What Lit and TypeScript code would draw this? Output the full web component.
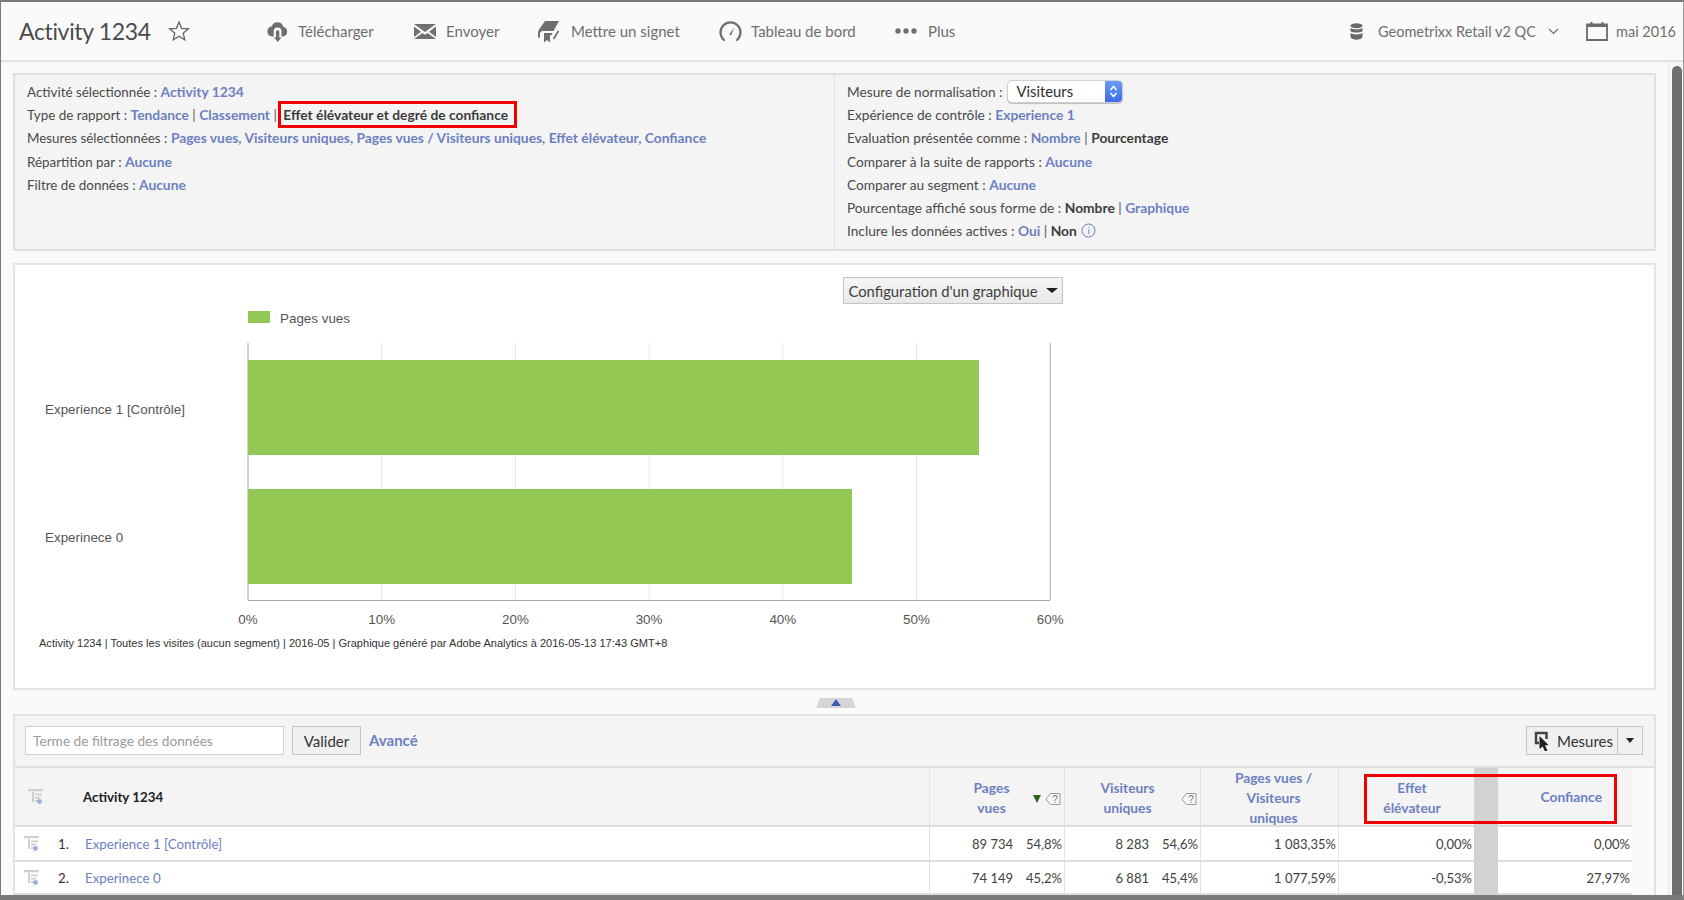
import { LitElement, html, css, svg } from "lit";
import { customElement } from "lit/decorators.js";

const treeIcon = html`<svg class="tree" width="16" height="15" viewBox="0 0 16 15"><path d="M0 0h15v2.200H0zM4 3h2v10H4zM7 4.500h7v1.800H7zM7 7.700h5.500v1.800H7zM7 10.900h3v1.800H7z" fill="#cfcfcf"/><circle cx="11.500" cy="12.500" r="2.400" fill="#9dadde"/></svg>`;
const tagIcon = html`<svg class="tagicon" width="16" height="14" viewBox="0 0 16 14"><path d="M1 7l4.500-5.500H15v11H5.500z" fill="#f6f6f6" stroke="#9a9a9a"/><text class="tagq" x="10" y="10.800" text-anchor="middle">?</text></svg>`;

const ticks = [0, 10, 20, 30, 40, 50, 60];
const tickX = (i: number) => 248 + i * 133.7;

@customElement("app-root")
export class AppRoot extends LitElement {
  static styles = css`
    :host { display: block; height: 900px; overflow: hidden; background: #fafafa; color: #4a4a4a;
      font-family: "Lato", "Open Sans", sans-serif; font-size: 13.300px; }
    * { box-sizing: border-box; }
    a { color: #6c80c2; text-decoration: none; font-weight: 700; }
    b { color: #3c3c3c; font-weight: 700; }
    .frame { height: 900px; display: flex; flex-direction: column; border-top: 2px solid #7a7a7a; border-left: 1px solid #7a7a7a; border-right: 1px solid #9a9a9a; border-bottom: 5px solid #7a7a7a; overflow: hidden; }

    .top { height: 60px; flex: none; display: flex; align-items: center; border-bottom: 2px solid #e2e2e2; color: #6e6e6e; font-size: 15px; }
    .title { font-size: 23px; letter-spacing: -0.350px; color: #4c4c4c; margin-left: 18px; width: 131px; white-space: nowrap; }
    .star { margin-left: 18px; margin-right: 76px; display: block; }
    .act { display: flex; align-items: center; white-space: nowrap; }
    .act svg { display: block; flex: none; }
    .a-dl { width: 100px; gap: 9px; }
    .a-send { width: 92px; gap: 9px; margin-left: 47px; }
    .a-mark { width: 140px; gap: 11px; margin-left: 32px; }
    .a-dash { width: 136px; gap: 9px; margin-left: 42px; }
    .a-more { width: 60px; gap: 11px; margin-left: 40px; }
    .a-suite { width: 186px; gap: 15px; font-size: 14.500px; }
    .a-date { width: 87px; gap: 8px; margin-left: 27px; font-size: 14.500px; }
    .chev { margin-left: 12px; display: flex; }
    .endpad { width: 10px; }
    .spacer { flex: 1; }

    .body { flex: 1; min-height: 0; display: flex; }
    .main { flex: 1; min-width: 0; padding: 11px 12px 0 12px; display: flex; flex-direction: column; }
    .scroll { width: 15px; flex: none; background: #f6f6f6; border-left: 1px solid #e6e6e6; padding: 4px 1px 0 3px; }
    .thumb { height: 100%; background: #6f6f6f; border-radius: 5px 5px 0 0; }

    .info { height: 178px; flex: none; display: flex; background: #f4f4f4; border: 2px solid #e0e0e0; }
    .col { padding: 5px 0 0 12px; line-height: 23.200px; white-space: nowrap; }
    .col > div { height: 23.200px; }
    .col a, .col b { font-size: 13.800px; }
    .col.l { width: 820px; border-right: 1px solid #e2e2e2; font-size: 13.400px; }
    .col.r { flex: 1; padding-left: 12px; font-size: 13.700px; }
    .sep { font-style: normal; margin: 0 3.500px; color: #555; }
    .row { display: flex; align-items: center; gap: 4px; }
    .boxed { position: relative; margin-left: 3px; }
    .boxed::after { content: ""; position: absolute; left: -5px; right: -9px; top: -5px; bottom: -5px; border: 3px solid #f00000; pointer-events: none; }
    .select { display: inline-flex; width: 116px; height: 23px; border: 1px solid #cfcfcf; border-radius: 5px; background: #fff; color: #2e2e2e; overflow: hidden; margin-left: 1px; padding-left: 8px; align-items: center; justify-content: space-between; font-size: 14.800px; box-shadow: 0 1px 1px #bbb; }
    .select i { width: 17px; height: 23px; background: linear-gradient(#6d9cf6, #3a6ce8); display: flex; align-items: center; justify-content: center; }
    .info-i { margin-left: 0; }

    .chart { height: 427px; margin-top: 12px; flex: none; background: #fff; border: 2px solid #e4e4e4; position: relative; }
    .chart svg.plot { display: block; position: absolute; left: -15px; top: -265px; }
    .plot text { font-family: "Liberation Sans", Arial, sans-serif; fill: #555; font-size: 13.400px; }
    .plot text.foot { font-size: 11.050px; fill: #333; }
    .cfg { position: absolute; left: 828px; top: 12px; width: 220px; height: 27px; display: flex; align-items: center; justify-content: center; gap: 8px; background: linear-gradient(#f6f6f6, #e8e8e8); border: 1px solid #c4c4c4; color: #3e3e3e; font-size: 14.800px; white-space: nowrap; }
    .caret { width: 0; height: 0; border-left: 4px solid transparent; border-right: 4px solid transparent; border-top: 5px solid #222; display: block; }
    .cfg .caret { border-left-width: 6px; border-right-width: 6px; border-top-width: 5px; }

    .handle { height: 24px; flex: none; display: flex; justify-content: center; align-items: flex-end; padding: 0 0 0 3px; }
    .handle div { width: 40px; height: 10px; margin-bottom: 6px; background: #d6d6d6; clip-path: polygon(10% 0, 90% 0, 100% 100%, 0 100%); display: flex; justify-content: center; padding-top: 1px; }
    .handle i { width: 0; height: 0; border-left: 5px solid transparent; border-right: 5px solid transparent; border-bottom: 7px solid #3b5cae; }

    .table { flex: 1; min-height: 0; border: solid #e2e2e2; border-width: 2px 2px 0 2px; position: relative; }
    .tools { height: 52px; background: #f4f4f4; border-bottom: 2px solid #e0e0e0; display: flex; align-items: flex-start; padding: 10px 11px 0 10px; }
    .input { width: 259px; height: 29px; background: #fff; border: 1px solid #cfcfcf; color: #9a9a9a; display: flex; align-items: center; padding-left: 7px; white-space: nowrap; font-size: 13.700px; }
    .btn { height: 29px; background: #f0f0f0; border: 1px solid #c6c6c6; color: #333; font-size: 15px; display: flex; align-items: center; justify-content: center; white-space: nowrap; }
    .valider { width: 69px; margin-left: 8px; }
    .adv { margin-left: 8px; font-size: 15px; line-height: 29px; }
    .mes { margin-left: auto; width: 117px; justify-content: flex-start; }
    .mes span:first-child { width: 91px; height: 100%; display: flex; align-items: center; gap: 6px; padding-left: 7px; border-right: 1px solid #c6c6c6; }
    .mes span:last-child { flex: 1; display: flex; justify-content: center; }

    .grid { display: grid; grid-template-columns: 915px 135px 136px 138px 135px 24px 134px; background: #fff; width: 1617px; }
    .h { height: 59px; background: #f4f4f4; border-bottom: 2px solid #dedede; border-right: 1px solid #e2e2e2; display: flex; align-items: center; }
    .h.name { padding-left: 13px; color: #222; font-weight: 700; }
    .h.name span { margin-left: 39px; }
    .h.m { font-size: 13.800px; text-align: center; line-height: 20px; position: relative; justify-content: center; padding-top: 2px; }
    .h.pv { padding-right: 11px; }
    .h.vu { padding-right: 10px; }
    .h.ratio { padding-left: 8px; }
    .h.eff { padding-left: 11px; border-right: none; }
    .h.conf { justify-content: flex-end; padding-right: 30px; border-right: none; padding-top: 0; }
    .tagicon { position: absolute; right: 3px; top: 24px; display: block; }
    .tagq { font-family: "Liberation Sans", Arial, sans-serif; font-size: 10px; fill: #777; }
    .tri { position: absolute; right: 23px; top: 27px; width: 0; height: 0; border-left: 4px solid transparent; border-right: 4px solid transparent; border-top: 8px solid #2c6313; }
    .band { background: #d2d2d2; grid-row: span 3; }
    .c { height: 33px; border-bottom: 2px solid #dedede; border-right: 1px solid #e2e2e2; display: flex; align-items: center; color: #404040; padding-right: 2px; justify-content: flex-end; white-space: nowrap; gap: 13px; font-size: 13px; }
    .c.r1 { height: 35px; }
    .c.name { justify-content: flex-start; padding-left: 9px; gap: 0; font-size: 13.300px; }
    .c.name em { font-style: normal; width: 28px; padding-left: 18px; color: #333; flex: none; }
    .c.name a { font-weight: 400; margin-left: 17px; }
    .c.noborder { border-right: none; }
    .redbox { position: absolute; left: 1349px; top: 58px; width: 253px; height: 50px; border: 3px solid #f00000; pointer-events: none; }
  `;

  private chart() {
    return svg`
      <rect x="248" y="311" width="22" height="12" fill="#92c853"/>
      <text x="280" y="323">Pages vues</text>
      ${ticks.map((_, i) => svg`<line x1=${tickX(i)} x2=${tickX(i)} y1="343" y2="600" stroke=${i === 0 || i === 6 ? "#a8a8a8" : "#e6e6e6"}/>`)}
      <line x1="248" x2="1050" y1="600.500" y2="600.500" stroke="#a8a8a8"/>
      <rect x="248" y="360" width="731" height="95" fill="#92c853"/>
      <rect x="248" y="489" width="604" height="95" fill="#92c853"/>
      <text x="45" y="413.500">Experience 1 [Contrôle]</text>
      <text x="45" y="542">Experinece 0</text>
      ${ticks.map((t, i) => svg`<text x=${tickX(i)} y="624" text-anchor="middle">${t}%</text>`)}
      <text class="foot" x="39" y="647">Activity 1234 | Toutes les visites (aucun segment) | 2016-05 | Graphique généré par Adobe Analytics à 2016-05-13 17:43 GMT+8</text>
    `;
  }

  render() {
    const star = html`<svg class="star" width="22" height="22" viewBox="0 0 22 22"><path d="M11 2l2.600 6.300 6.800.5-5.200 4.400 1.600 6.600L11 16.200l-5.800 3.600 1.600-6.600L1.600 8.800l6.800-.5z" fill="none" stroke="#666" stroke-width="1.300"/></svg>`;
    const cloud = html`<svg width="23" height="23" viewBox="0 0 23 23"><path d="M6 16.500a5 5 0 0 1-.5-9.900A6.200 6.200 0 0 1 17.300 6.700a5 5 0 0 1-.3 9.800h-1.500v-5a3.900 3.900 0 0 0-7.800 0v5z" fill="#6f6f6f"/><path d="M10 11.500a1.700 1.700 0 0 1 3.300 0v6h2.200l-3.800 4.500-3.800-4.500H10z" fill="#6f6f6f"/></svg>`;
    const mail = html`<svg width="24" height="18" viewBox="0 0 24 18"><path d="M1 2h22L12 10z M1 4.500l7 5.200L1 15z M23 4.500l-7 5.200 7 5.300z M1 17l8.500-6 2.500 1.800 2.500-1.800 8.500 6z" fill="#707070"/></svg>`;
    const book = html`<svg width="23" height="23" viewBox="0 0 23 23"><path d="M8 1h14l-5.500 10H6c-2.500 0-3.500 2-3 4v2.500H1V13c0-3 2-5 3.500-7z" fill="#6f6f6f"/><path d="M7 13h8.500l-1 2.200H13v7.300l-3-2.500-3 2.500z" fill="#6f6f6f"/><path d="M16.500 19L21.500 11" stroke="#6f6f6f" stroke-width="1.800"/></svg>`;
    const gauge = html`<svg width="23" height="23" viewBox="0 0 23 23"><path d="M5 20A10 10 0 1 1 18 20" fill="none" stroke="#6f6f6f" stroke-width="2.200" stroke-linecap="round"/><path d="M10.200 14.200L15.500 7.500l-3.600 8z" fill="#6f6f6f"/></svg>`;
    const dots = html`<svg width="22" height="6" viewBox="0 0 22 6"><circle cx="3" cy="3" r="2.700" fill="#6f6f6f"/><circle cx="11" cy="3" r="2.700" fill="#6f6f6f"/><circle cx="19" cy="3" r="2.700" fill="#6f6f6f"/></svg>`;
    const db = html`<svg width="13" height="17" viewBox="0 0 13 17"><ellipse cx="6.500" cy="2.800" rx="6" ry="2.500" fill="#6a6a6a"/><path d="M.5 4.800C2 7 11 7 12.500 4.800V8C11 10 2 10 .5 8z M.5 9.800C2 12 11 12 12.500 9.800V14C11 17.500 2 17.500 .5 14z" fill="#6a6a6a"/></svg>`;
    const chev = html`<svg width="11" height="7" viewBox="0 0 11 7"><path d="M1 1l4.500 4.500L10 1" fill="none" stroke="#6e6e6e" stroke-width="1.200"/></svg>`;
    const cal = html`<svg width="22" height="20" viewBox="0 0 22 20"><path d="M1 3.500h20V19H1z" fill="none" stroke="#6a6a6a" stroke-width="1.800"/><path d="M1 5h20" stroke="#6a6a6a" stroke-width="2"/><path d="M5.500 1v4M16.500 1v4" stroke="#6a6a6a" stroke-width="2"/></svg>`;
    const info = html`<svg class="info-i" width="15" height="15" viewBox="0 0 15 15"><circle cx="7.500" cy="7.500" r="6.500" fill="none" stroke="#6c80c2"/><path d="M8 3.800v1M7.800 6.300v4.700" stroke="#6c80c2"/></svg>`;
    const cursor = html`<svg width="17" height="20" viewBox="0 0 17 20"><path d="M12.500 8V2H2v10h3" fill="none" stroke="#444" stroke-width="2.500"/><path d="M5.500 5l9 9-3.500.5 2.500 5-2.500 1-2.300-5L5.500 18z" fill="#222"/></svg>`;
    const arrows = html`<svg width="9" height="15" viewBox="0 0 9 15"><path d="M1.500 6L4.500 2.500 7.500 6M1.500 9L4.500 12.500 7.500 9" fill="none" stroke="#fff" stroke-width="1.500"/></svg>`;

    return html`<div class="frame">
      <header class="top">
        <div class="title">Activity 1234</div>
        ${star}
        <div class="act a-dl">${cloud}<span>Télécharger</span></div>
        <div class="act a-send">${mail}<span>Envoyer</span></div>
        <div class="act a-mark">${book}<span>Mettre un signet</span></div>
        <div class="act a-dash">${gauge}<span>Tableau de bord</span></div>
        <div class="act a-more">${dots}<span>Plus</span></div>
        <div class="spacer"></div>
        <div class="act a-suite">${db}<span>Geometrixx Retail v2 QC</span></div>
        <div class="chev">${chev}</div>
        <div class="act a-date">${cal}<span>mai 2016</span></div>
        <div class="endpad"></div>
      </header>
      <div class="body">
        <div class="main">
          <section class="info">
            <div class="col l">
              <div>Activité sélectionnée : <a>Activity 1234</a></div>
              <div>Type de rapport : <a>Tendance</a><i class="sep">|</i><a>Classement</a><i class="sep">|</i><b class="boxed">Effet élévateur et degré de confiance</b></div>
              <div>Mesures sélectionnées : <a>Pages vues, Visiteurs uniques, Pages vues / Visiteurs uniques, Effet élévateur, Confiance</a></div>
              <div>Répartition par : <a>Aucune</a></div>
              <div>Filtre de données : <a>Aucune</a></div>
            </div>
            <div class="col r">
              <div class="row"><span>Mesure de normalisation :</span><span class="select">Visiteurs<i>${arrows}</i></span></div>
              <div>Expérience de contrôle : <a>Experience 1</a></div>
              <div>Evaluation présentée comme : <a>Nombre</a><i class="sep">|</i><b>Pourcentage</b></div>
              <div>Comparer à la suite de rapports : <a>Aucune</a></div>
              <div>Comparer au segment : <a>Aucune</a></div>
              <div>Pourcentage affiché sous forme de : <b>Nombre</b><i class="sep">|</i><a>Graphique</a></div>
              <div class="row"><span>Inclure les données actives : <a>Oui</a><i class="sep">|</i><b>Non</b></span>${info}</div>
            </div>
          </section>
          <section class="chart">
            <svg class="plot" width="1100" height="690" viewBox="0 0 1100 690">${this.chart()}</svg>
            <div class="cfg">Configuration d'un graphique <span class="caret"></span></div>
          </section>
          <div class="handle"><div><i></i></div></div>
          <section class="table">
            <div class="tools">
              <div class="input">Terme de filtrage des données</div>
              <div class="btn valider">Valider</div>
              <a class="adv">Avancé</a>
              <div class="btn mes"><span>${cursor}Mesures</span><span><i class="caret"></i></span></div>
            </div>
            <div class="grid">
              <div class="h name">${treeIcon}<span>Activity 1234</span></div>
              <div class="h m pv"><a>Pages<br/>vues</a><i class="tri"></i>${tagIcon}</div>
              <div class="h m vu"><a>Visiteurs<br/>uniques</a>${tagIcon}</div>
              <div class="h m ratio"><a>Pages vues /<br/>Visiteurs<br/>uniques</a></div>
              <div class="h m eff"><a>Effet<br/>élévateur</a></div>
              <div class="band"></div>
              <div class="h m conf"><a>Confiance</a></div>

              <div class="c r1 name">${treeIcon}<em>1.</em><a>Experience 1 [Contrôle]</a></div>
              <div class="c r1"><span>89 734</span><span>54,8%</span></div>
              <div class="c r1"><span>8 283</span><span>54,6%</span></div>
              <div class="c r1"><span>1 083,35%</span></div>
              <div class="c r1 noborder"><span>0,00%</span></div>
              <div class="c r1 noborder"><span>0,00%</span></div>

              <div class="c name">${treeIcon}<em>2.</em><a>Experinece 0</a></div>
              <div class="c"><span>74 149</span><span>45,2%</span></div>
              <div class="c"><span>6 881</span><span>45,4%</span></div>
              <div class="c"><span>1 077,59%</span></div>
              <div class="c noborder"><span>-0,53%</span></div>
              <div class="c noborder"><span>27,97%</span></div>
            </div>
            <div class="redbox"></div>
          </section>
        </div>
        <div class="scroll"><div class="thumb"></div></div>
      </div>
    </div>`;
  }
}
